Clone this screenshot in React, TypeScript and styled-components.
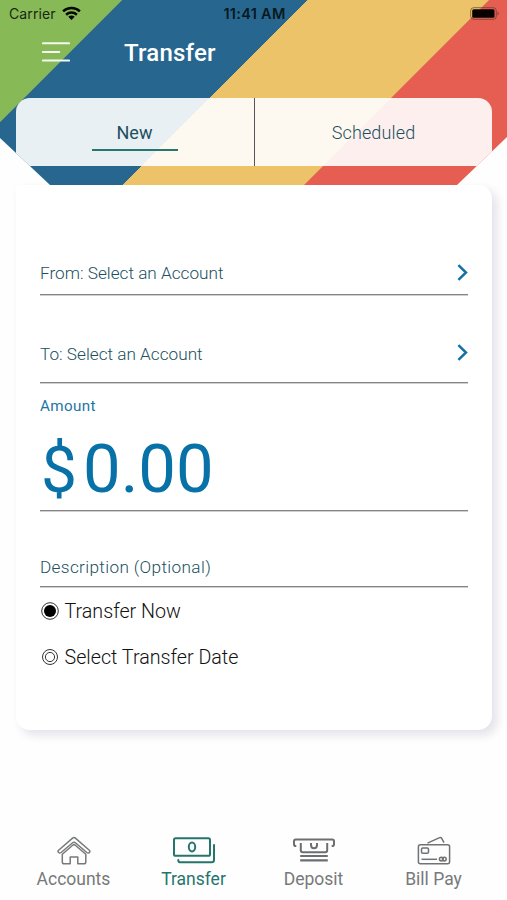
import React, { useState } from "react";
import styled, { createGlobalStyle } from "styled-components";

const GlobalStyle = createGlobalStyle`
  * { box-sizing: border-box; }
  body { margin: 0; background: #fefefe; font-family: Roboto, sans-serif; }
  button, input { font: inherit; }
`;

const Screen = styled.div`
  width: 507px;
  height: 900px;
  display: flex;
  flex-direction: column;
  overflow: hidden;
  background: #fefefe;
`;

const Header = styled.header`
  height: 185px;
  flex: none;
  display: flex;
  flex-direction: column;
  clip-path: polygon(0 0, 100% 0, 100% 137px, 457px 100%, 50px 100%, 0 138px);
  background: linear-gradient(
    135deg,
    #88b957 0 17.6%,
    #27678f 17.7% 44.38%,
    #edc369 44.48% 70.62%,
    #e65e52 70.72%
  );
`;

const StatusBar = styled.div`
  height: 27px;
  padding: 0 7px 0 9px;
  display: grid;
  grid-template-columns: 1fr auto 1fr;
  align-items: center;
  font-family: Inter, sans-serif;
  font-size: 14px;
  line-height: 27px;
  color: #10202a;
`;

const Carrier = styled.div`
  display: flex;
  align-items: center;
  gap: 6px;
  letter-spacing: 0.12px;
  color: #172813;
`;

const Clock = styled.div`
  font-size: 14.5px;
  font-weight: 600;
  letter-spacing: 0.3px;
  color: #071821;
`;

const BatterySlot = styled.div`
  display: flex;
  justify-content: flex-end;
`;

const TitleBar = styled.div`
  height: 71px;
  padding: 0 42px;
  display: flex;
  align-items: flex-start;
  gap: 54px;
`;

const IconButton = styled.button`
  display: flex;
  margin: 14px 0 0;
  padding: 0;
  border: 0;
  background: none;
`;

const Title = styled.h1`
  margin: 11px 0 0;
  font-size: 24px;
  font-weight: 500;
  line-height: 31px;
  letter-spacing: 0.2px;
  color: #fff;
`;

const Tabs = styled.div`
  height: 68px;
  margin: 0 15px 0 16px;
  display: flex;
  overflow: hidden;
  border-radius: 14px 14px 0 0;
  background: rgba(255, 255, 255, 0.9);
`;

const Tab = styled.button<{ $active: boolean }>`
  flex: 1;
  display: flex;
  flex-direction: column;
  align-items: center;
  padding: 22px 1px 0 0;
  border: 0;
  background: none;
  font-size: 18px;
  line-height: 26px;
  font-weight: ${(p) => (p.$active ? 400 : 300)};
  color: #1d4f5f;

  & + & {
    padding-right: 0;
    border-left: 1px solid #555;
    letter-spacing: 0.15px;
  }

  &::after {
    content: "";
    width: 86px;
    height: 2px;
    margin-top: 3px;
    background: ${(p) => (p.$active ? "#27766f" : "transparent")};
  }
`;

const Card = styled.main`
  height: 545px;
  flex: none;
  margin: 0 15px 0 16px;
  padding: 58px 24px 0;
  display: flex;
  flex-direction: column;
  border-radius: 0 14px 14px 14px;
  background: #fff;
  box-shadow: 5px 5px 10px rgba(55, 55, 115, 0.14);
`;

const Field = styled.div<{ $height: number; $top?: number }>`
  height: ${(p) => p.$height}px;
  padding-top: ${(p) => p.$top ?? 0}px;
  flex: none;
  border-bottom: 1px solid #858585;
  box-shadow: 0 1px 0 #d0d0d0;
`;

const SelectRow = styled.div`
  display: flex;
  align-items: center;
  justify-content: space-between;
  height: 26px;
`;

const FieldText = styled.span<{ $spacing?: number }>`
  font-size: 17.2px;
  font-weight: 300;
  line-height: 26px;
  letter-spacing: ${(p) => p.$spacing ?? 0}px;
  color: #204f60;
`;

const AmountLabel = styled.div`
  font-size: 15.2px;
  line-height: 22px;
  letter-spacing: 0.35px;
  color: #1d75a3;
`;

const Amount = styled.div`
  display: flex;
  align-items: baseline;
  margin-top: 12px;
  font-size: 67px;
  line-height: 80px;
  color: #0872a8;
`;

const Currency = styled.span`
  width: 43px;
  padding-left: 1px;
  font-size: 64px;
`;

const Options = styled.div`
  display: flex;
  flex-direction: column;
  gap: 20px;
  padding-top: 10.5px;
`;

const Option = styled.button`
  display: flex;
  align-items: center;
  gap: 4.5px;
  height: 26.5px;
  padding: 0;
  border: 0;
  background: none;
  font-size: 19.7px;
  font-weight: 300;
  color: #111;
`;

const OptionText = styled.span`
  padding-top: 1px;
`;

const Nav = styled.nav`
  margin-top: auto;
  height: 70px;
  padding: 0 13.5px;
  display: grid;
  grid-template-columns: repeat(4, 1fr);
`;

const NavItem = styled.button<{ $active?: boolean }>`
  display: flex;
  flex-direction: column;
  align-items: center;
  padding: 6px 0 0;
  border: 0;
  background: none;
  font-size: 17.5px;
  line-height: 26px;
  color: ${(p) => (p.$active ? "#26756d" : "#77797a")};
`;

const WifiIcon = () => (
  <svg width="19" height="15" viewBox="0 0 19 15" fill="none" stroke="#030803" strokeWidth="2.5">
    <path d="M1.1 5.3C5.8 .8 13.2 .8 17.9 5.3" />
    <path d="M4.1 8.7C7.2 5.9 11.8 5.9 14.9 8.7" />
    <path d="M6.3 10.8C8.1 9.2 10.9 9.2 12.7 10.8L9.5 14Z" fill="#030803" stroke="none" />
  </svg>
);

const BatteryIcon = () => (
  <svg width="30" height="13" viewBox="0 0 30 13" fill="none">
    <rect x=".7" y=".7" width="25.6" height="11.6" rx="3" stroke="#4b3d27" strokeOpacity=".65" />
    <rect x="2.2" y="2.2" width="22.3" height="8.6" rx="1.5" fill="#080101" />
    <path d="M27.6 4.5Q29.6 6.5 27.6 8.5Z" fill="#4b2525" fillOpacity=".7" />
  </svg>
);

const MenuIcon = () => (
  <svg width="28" height="22" viewBox="0 0 28 22" stroke="#f4faf3" strokeWidth="2.1" strokeLinecap="round">
    <path d="M1 2.3H27M1 11H17.2M1 19.5H27" />
  </svg>
);

const Chevron = () => (
  <svg width="11" height="19" viewBox="0 0 11 19" fill="none" stroke="#1770a3" strokeWidth="2.5">
    <path d="M1.4 1.2L9 8.5L1.4 15.8" />
  </svg>
);

const RadioIcon = ({ checked }: { checked: boolean }) => (
  <svg width="20" height="20" viewBox="0 0 20 20" fill="none" stroke="#333">
    <circle cx="10" cy="10" r={checked ? 8.3 : 7.5} strokeWidth="1" />
    {checked ? (
      <circle cx="10" cy="10" r="6" fill="#000" stroke="none" />
    ) : (
      <circle cx="10" cy="10" r="4.6" strokeWidth="1" />
    )}
  </svg>
);

const HouseIcon = () => (
  <svg width="34" height="30" viewBox="0 0 34 30" fill="none" stroke="#77797a" strokeWidth="1.5" strokeLinejoin="round">
    <path d="M1.3 16.2Q.6 15.2 1.6 14.2L15.6 2.1Q17 .9 18.4 2.1L32.3 14.2Q33.3 15.2 32.6 16.2Q31.5 17.8 29.8 16.5L18.4 6.8Q17 5.6 15.6 6.8L4.1 16.5Q2.4 17.8 1.3 16.2Z" />
    <path d="M5.3 18.2L15.7 9.2Q17 8.1 18.3 9.2L28.8 18.2V26Q28.8 27.8 27 27.8H20.8V21H13.2V27.8H7.1Q5.3 27.8 5.3 26Z" />
  </svg>
);

const CashIcon = () => (
  <svg width="44" height="30" viewBox="0 0 44 30" fill="none" stroke="#26756d" strokeWidth="2" strokeLinecap="round">
    <rect x="2" y="2.2" width="36" height="17.6" rx="1.6" />
    <ellipse cx="20" cy="11" rx="3.2" ry="4.4" />
    <path d="M42 9V24Q42 26.3 39.7 26.3H8Q6.3 26.3 6.3 24" />
  </svg>
);

const DepositIcon = () => (
  <svg width="44" height="30" viewBox="0 0 44 30" fill="none" stroke="#6c6e70" strokeWidth="2">
    <path d="M4.3 10H3.8Q2 10 2 8.2V5.3Q2 3.5 3.8 3.5H40.2Q42 3.5 42 5.3V8.2Q42 10 40.2 10H39.7" />
    <path d="M8.8 7V14.2Q8.8 16.2 10.8 16.2H33.2Q35.2 16.2 35.2 14.2V7" />
    <path d="M19 7V8.8Q19 12.3 22 12.3Q25 12.3 25 8.8V7" />
    <path d="M8.2 20H35.8M8.2 24.4H35.8" strokeWidth="2.2" />
  </svg>
);

const CardsIcon = () => (
  <svg width="34" height="30" viewBox="0 0 34 30" fill="none" stroke="#707274" strokeWidth="1.5" strokeLinejoin="round">
    <path d="M10.5 7.1L22.6 1.6Q24 1 24.7 2.3L27 6.7" />
    <rect x="1.4" y="8.7" width="31.2" height="19" rx="2" />
    <rect x="4.5" y="12" width="7" height="5.3" rx="1.3" />
    <path d="M4.5 23.3H20" />
    <circle cx="24.3" cy="23.1" r="1.9" />
    <circle cx="27.3" cy="23.1" r="1.9" />
  </svg>
);

const tabs = ["New", "Scheduled"];
const options = ["Transfer Now", "Select Transfer Date"];
const navItems = [
  { label: "Accounts", Icon: HouseIcon },
  { label: "Transfer", Icon: CashIcon },
  { label: "Deposit", Icon: DepositIcon },
  { label: "Bill Pay", Icon: CardsIcon },
];

export default function App() {
  const [tab, setTab] = useState(0);
  const [option, setOption] = useState(0);

  return (
    <Screen>
      <GlobalStyle />
      <Header>
        <StatusBar>
          <Carrier>
            Carrier
            <WifiIcon />
          </Carrier>
          <Clock>11:41 AM</Clock>
          <BatterySlot>
            <BatteryIcon />
          </BatterySlot>
        </StatusBar>
        <TitleBar>
          <IconButton aria-label="Menu">
            <MenuIcon />
          </IconButton>
          <Title>Transfer</Title>
        </TitleBar>
        <Tabs>
          {tabs.map((name, i) => (
            <Tab key={name} $active={tab === i} onClick={() => setTab(i)}>
              {name}
            </Tab>
          ))}
        </Tabs>
      </Header>
      <Card>
        <Field $height={52} $top={17}>
          <SelectRow>
            <FieldText>From: Select an Account</FieldText>
            <Chevron />
          </SelectRow>
        </Field>
        <Field $height={88} $top={45.5}>
          <SelectRow>
            <FieldText>To: Select an Account</FieldText>
            <Chevron />
          </SelectRow>
        </Field>
        <Field $height={128} $top={12}>
          <AmountLabel>Amount</AmountLabel>
          <Amount>
            <Currency>$</Currency>
            <span>0.00</span>
          </Amount>
        </Field>
        <Field $height={76} $top={43}>
          <FieldText $spacing={0.35}>Description (Optional)</FieldText>
        </Field>
        <Options>
          {options.map((name, i) => (
            <Option key={name} onClick={() => setOption(i)}>
              <RadioIcon checked={option === i} />
              <OptionText>{name}</OptionText>
            </Option>
          ))}
        </Options>
      </Card>
      <Nav>
        {navItems.map(({ label, Icon }) => (
          <NavItem key={label} $active={label === "Transfer"}>
            <Icon />
            {label}
          </NavItem>
        ))}
      </Nav>
    </Screen>
  );
}
